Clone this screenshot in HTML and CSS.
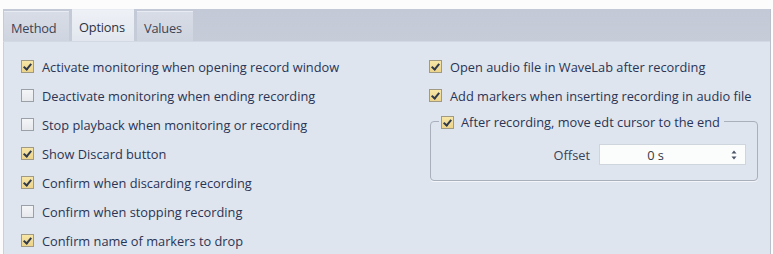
FILE: index.html
```html
<!DOCTYPE html>
<html>
<head>
<meta charset="utf-8">
<link rel="stylesheet" href="styles.css">
</head>
<body>
<div class="window">
  <div class="tabbar">
    <div class="tab">Method</div>
    <div class="tab active">Options</div>
    <div class="tab">Values</div>
  </div>
  <div class="panel">
    <div class="col left">
      <div class="row"><span class="cb on"></span><span>Activate monitoring when opening record window</span></div>
      <div class="row"><span class="cb"></span><span>Deactivate monitoring when ending recording</span></div>
      <div class="row"><span class="cb"></span><span>Stop playback when monitoring or recording</span></div>
      <div class="row"><span class="cb on"></span><span>Show Discard button</span></div>
      <div class="row"><span class="cb on"></span><span>Confirm when discarding recording</span></div>
      <div class="row"><span class="cb"></span><span>Confirm when stopping recording</span></div>
      <div class="row"><span class="cb on"></span><span>Confirm name of markers to drop</span></div>
    </div>
    <div class="col right">
      <div class="row"><span class="cb on"></span><span>Open audio file in WaveLab after recording</span></div>
      <div class="row"><span class="cb on"></span><span>Add markers when inserting recording in audio file</span></div>
      <div class="group">
        <div class="legend"><span class="cb on"></span><span>After recording, move edt cursor to the end</span></div>
        <div class="field">
          <span class="label">Offset</span>
          <div class="spin">
            <span class="val">0 s</span>
            <span class="arrows">
              <svg width="6" height="12" viewBox="0 0 6 12"><path d="M3 1.5 L5.5 4.5 H0.5 Z M3 10.5 L5.5 7.5 H0.5 Z" fill="#4a5468"/></svg>
            </span>
          </div>
        </div>
      </div>
    </div>
  </div>
</div>
</body>
</html>
```
FILE: styles.css
```css
html, body {
  margin: 0;
  padding: 0;
  background: #fbfcfb;
}
body {
  font-family: "Open Sans", "Liberation Sans", sans-serif;
  font-size: 12.8px;
  color: #2a3454;
}
.window {
  margin-top: 9px;
  margin-left: 3px;
  width: 767px;
  height: 245px;
  display: flex;
  flex-direction: column;
  border-right: 1px solid #b9c0cc;
}
.tabbar {
  height: 34px;
  background: linear-gradient(#c3c9d6, #c7ccd9);
  display: flex;
  align-items: flex-end;
  gap: 3px;
  padding-left: 1px;
  border-bottom: 1px solid #d3d9e3;
  box-sizing: border-box;
}
.tab {
  height: 30px;
  box-sizing: border-box;
  padding: 1px 7px 0;
  line-height: 30px;
  background: linear-gradient(#d7dce6, #cfd5e0);
  color: #3c4454;
  border-top: 1px solid #e8ecf2;
  letter-spacing: -0.2px;
}
.tab:first-child { width: 65px; }
.tab.active {
  height: 32px;
  line-height: 32px;
  background: linear-gradient(#eef1f6, #e2e7ef);
  color: #2c3240;
  width: 62px;
}
.tab:last-child { width: 56px; }
.panel {
  flex: 1;
  background: #dfe5ee;
  display: flex;
  padding: 10px 0 0 17px;
  border-left: 1px solid #c9d0da;
}
.col {
  display: flex;
  flex-direction: column;
}
.left { width: 408px; }
.row {
  height: 29px;
  display: flex;
  align-items: center;
  gap: 8px;
  white-space: nowrap;
}
.cb {
  width: 11px;
  height: 11px;
  border: 1px solid #9aa0a8;
  background: linear-gradient(#f4f5f7, #e6e8ec);
  flex: none;
  position: relative;
}
.cb.on {
  background: linear-gradient(#f7e6a6, #ecd38a);
  border-color: #a09a84;
}
.cb.on::after {
  content: "";
  position: absolute;
  left: 3px;
  top: 1px;
  width: 3px;
  height: 6px;
  border-right: 2px solid #2f3a4c;
  border-bottom: 2px solid #2f3a4c;
  transform: rotate(40deg);
}
.group {
  margin-top: 11px;
  margin-left: 1px;
  width: 328px;
  height: 60px;
  border: 1px solid #a9b0bc;
  border-radius: 4px;
  position: relative;
  box-sizing: border-box;
  box-shadow: 0 1px 0 #f2f5f9;
}
.legend {
  position: absolute;
  left: 8px;
  top: -10px;
  display: flex;
  align-items: center;
  gap: 7px;
  background: #dfe5ee;
  padding: 0 4px 0 2px;
  white-space: nowrap;
  height: 20px;
}
.field {
  display: flex;
  align-items: center;
  justify-content: flex-end;
  gap: 9px;
  padding: 22px 11px 0 0;
}
.label { color: #3a4256; }
.spin {
  width: 147px;
  height: 21px;
  background: #fbfcfc;
  border: 1px solid #cfd5dd;
  box-sizing: border-box;
  display: flex;
  align-items: center;
}
.val {
  flex: 1;
  text-align: center;
  color: #333a48;
  padding-right: 12px;
}
.arrows {
  width: 22px;
  display: flex;
  justify-content: center;
}
```
